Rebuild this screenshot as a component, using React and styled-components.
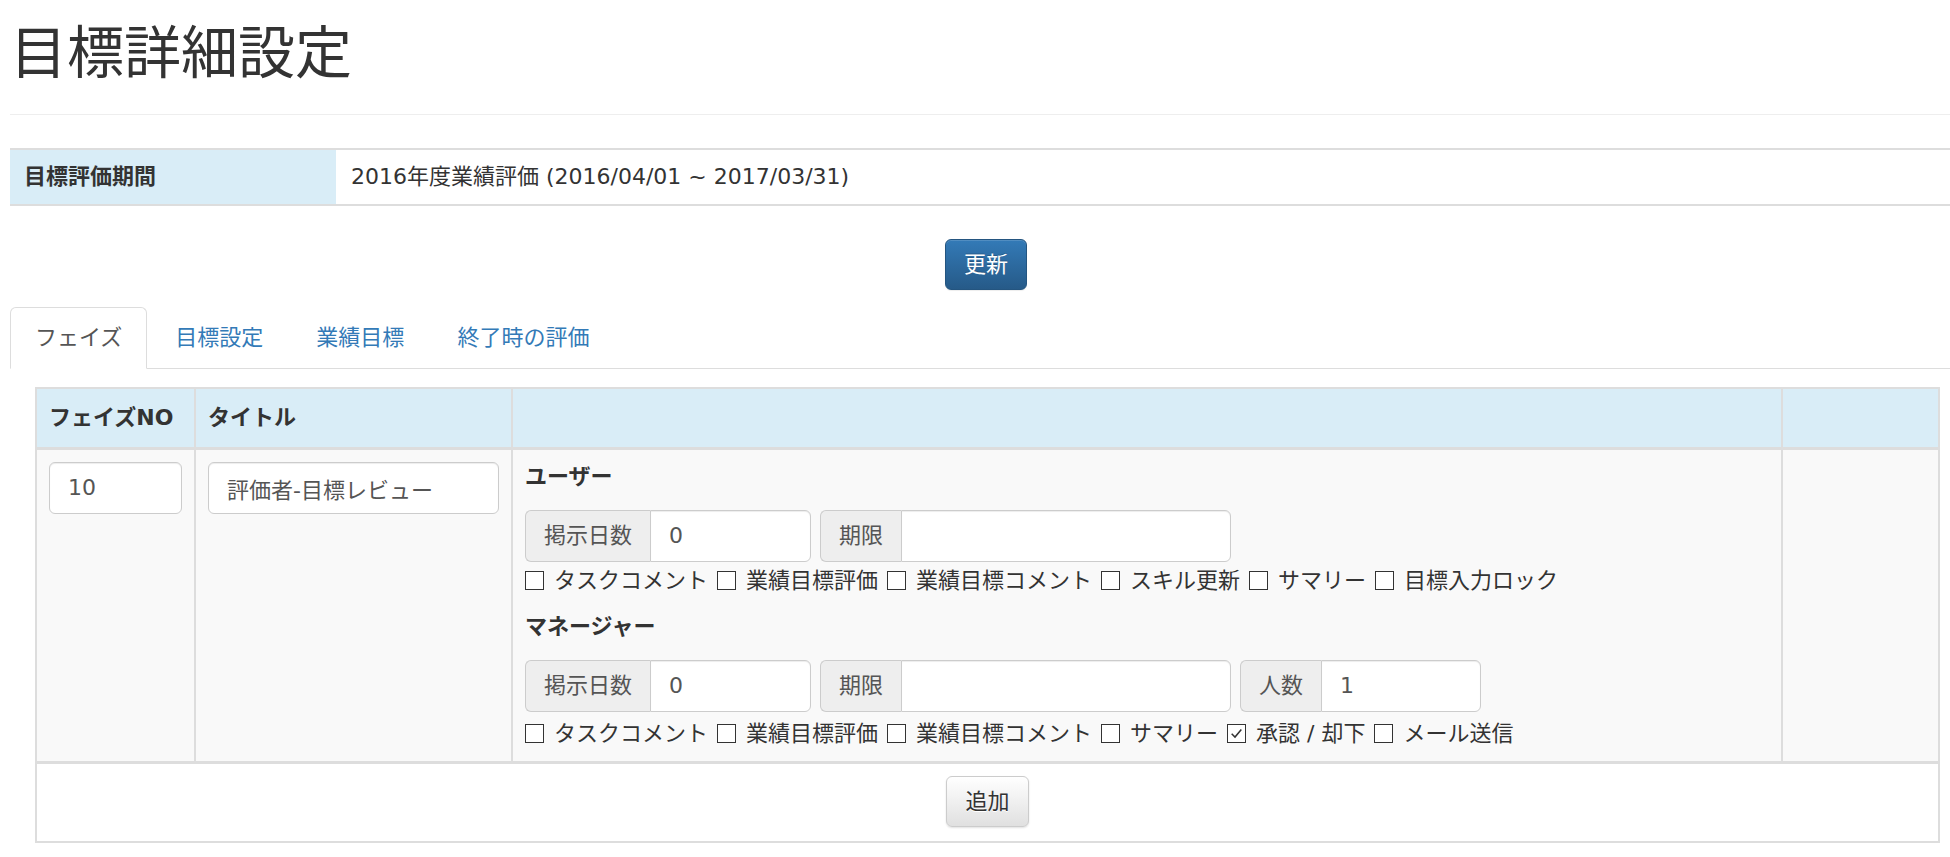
import React from "react"
import styled, { createGlobalStyle } from "styled-components"

const GlobalStyle = createGlobalStyle`
  html, body {
    margin: 0;
    padding: 0;
    background: #fff;
    overflow: hidden;
  }
  body {
    font-family: "DejaVu Sans", "Noto Sans CJK JP", sans-serif;
    font-size: 22px;
    line-height: 30px;
    color: #333;
  }
  * {
    box-sizing: border-box;
  }
`

const userChecks = [
  { label: "タスクコメント" },
  { label: "業績目標評価" },
  { label: "業績目標コメント" },
  { label: "スキル更新" },
  { label: "サマリー" },
  { label: "目標入力ロック" },
]

const managerChecks = [
  { label: "タスクコメント" },
  { label: "業績目標評価" },
  { label: "業績目標コメント" },
  { label: "サマリー" },
  { label: "承認 / 却下", checked: true },
  { label: "メール送信" },
]

const tabs = ["フェイズ", "目標設定", "業績目標", "終了時の評価"]

const CheckList = ({ items, gap }) => (
  <CheckRow $gap={gap}>
    {items.map((c) => (
      <CheckItem key={c.label}>
        <Box>
          {c.checked && (
            <svg width="15" height="15" viewBox="0 0 14 14">
              <path d="M2.5 7.2 L5.6 10.3 L11.5 3.2" fill="none" stroke="#333" strokeWidth="1.4" />
            </svg>
          )}
        </Box>
        <span>{c.label}</span>
      </CheckItem>
    ))}
  </CheckRow>
)

const App = () => {
  return (
    <Page>
      <GlobalStyle />
      <Title>目標詳細設定</Title>
      <Divider />
      <InfoTable>
        <tbody>
          <tr>
            <InfoLabel>目標評価期間</InfoLabel>
            <InfoValue>2016年度業績評価 (2016/04/01 ~ 2017/03/31)</InfoValue>
          </tr>
        </tbody>
      </InfoTable>
      <ButtonRow>
        <PrimaryButton>更新</PrimaryButton>
      </ButtonRow>
      <Tabs>
        {tabs.map((t, i) => (
          <Tab key={t} $active={i === 0}>
            {t}
          </Tab>
        ))}
      </Tabs>
      <PhaseTable>
        <colgroup>
          <col style={{ width: 159 }} />
          <col style={{ width: 317 }} />
          <col style={{ width: 1270 }} />
          <col />
        </colgroup>
        <thead>
          <tr>
            <HeadCell>フェイズNO</HeadCell>
            <HeadCell>タイトル</HeadCell>
            <HeadCell />
            <HeadCell />
          </tr>
        </thead>
        <tbody>
          <tr>
            <BodyCell>
              <TextInput value="10" readOnly />
            </BodyCell>
            <BodyCell>
              <TextInput value="評価者-目標レビュー" readOnly />
            </BodyCell>
            <BodyCell>
              <SectionTitle>ユーザー</SectionTitle>
              <GroupRow>
                <InputGroup $w={286}>
                  <Addon>掲示日数</Addon>
                  <GroupInput value="0" readOnly />
                </InputGroup>
                <InputGroup $w={411}>
                  <Addon>期限</Addon>
                  <GroupInput value="" readOnly />
                </InputGroup>
              </GroupRow>
              <CheckList items={userChecks} gap={4} />
              <SectionTitle $gap>マネージャー</SectionTitle>
              <GroupRow>
                <InputGroup $w={286}>
                  <Addon>掲示日数</Addon>
                  <GroupInput value="0" readOnly />
                </InputGroup>
                <InputGroup $w={411}>
                  <Addon>期限</Addon>
                  <GroupInput value="" readOnly />
                </InputGroup>
                <InputGroup $w={241}>
                  <Addon>人数</Addon>
                  <GroupInput value="1" readOnly />
                </InputGroup>
              </GroupRow>
              <CheckList items={managerChecks} gap={7} />
            </BodyCell>
            <BodyCell />
          </tr>
          <tr>
            <FootCell colSpan={4}>
              <DefaultButton>追加</DefaultButton>
            </FootCell>
          </tr>
        </tbody>
      </PhaseTable>
    </Page>
  )
}

export default App

const Page = styled.div`
  width: calc(100% + 12px);
  padding: 0 0 20px 10px;
`
const Title = styled.h1`
  margin: 22px 0 0;
  font-size: 57px;
  line-height: 63px;
  font-weight: 400;
  color: #333;
`
const Divider = styled.hr`
  margin: 29px 0 33px;
  border: 0;
  border-top: 1px solid #eee;
`
const InfoTable = styled.table`
  width: 100%;
  border-collapse: collapse;
  border-top: 2px solid #ddd;
  border-bottom: 2px solid #ddd;
`
const InfoLabel = styled.th`
  width: 326px;
  padding: 12px 14px;
  background: #d9edf7;
  text-align: left;
  font-weight: 700;
`
const InfoValue = styled.td`
  padding: 12px 15px;
`
const ButtonRow = styled.div`
  display: flex;
  justify-content: center;
  margin-top: 33px;
`
const PrimaryButton = styled.button`
  font: inherit;
  line-height: 29px;
  padding: 10px 18px;
  color: #fff;
  background: linear-gradient(to bottom, #337ab7 0%, #265a88 100%);
  border: 1px solid #245580;
  border-radius: 6px;
  box-shadow: inset 0 1px 0 rgba(255, 255, 255, 0.15), 0 1px 1px rgba(0, 0, 0, 0.075);
  text-shadow: 0 -1px 0 rgba(0, 0, 0, 0.2);
`
const DefaultButton = styled.button`
  font: inherit;
  line-height: 29px;
  padding: 10px 18px;
  color: #333;
  background: linear-gradient(to bottom, #fff 0%, #e0e0e0 100%);
  border: 1px solid #ccc;
  border-radius: 6px;
  box-shadow: inset 0 1px 0 rgba(255, 255, 255, 0.15), 0 1px 2px rgba(0, 0, 0, 0.12);
  text-shadow: 0 1px 0 #fff;
`
const Tabs = styled.ul`
  display: flex;
  margin: 17px 0 0;
  padding: 0;
  list-style: none;
  border-bottom: 1px solid #ddd;
`
const Tab = styled.li`
  margin-right: 3px;
  margin-bottom: -1px;
  padding: 15px 24px;
  line-height: 30px;
  border: 1px solid ${(p) => (p.$active ? "#ddd" : "transparent")};
  border-bottom-color: transparent;
  border-radius: 6px 6px 0 0;
  background: ${(p) => (p.$active ? "#fff" : "transparent")};
  color: ${(p) => (p.$active ? "#555" : "#337ab7")};
`
const PhaseTable = styled.table`
  margin: 18px 22px 0 25px;
  width: calc(100% - 47px);
  border-collapse: collapse;
  table-layout: fixed;
`
const HeadCell = styled.th`
  padding: 12px;
  background: #d9edf7;
  border: 2px solid #ddd;
  border-bottom-width: 3px;
  text-align: left;
  font-weight: 700;
  height: 60px;
`
const BodyCell = styled.td`
  padding: 12px;
  background: #f9f9f9;
  border: 2px solid #ddd;
  vertical-align: top;
`
const FootCell = styled.td`
  padding: 12px 12px 14px;
  background: #fff;
  border: 2px solid #ddd;
  border-top-width: 3px;
  text-align: center;
`
const TextInput = styled.input`
  display: block;
  width: 100%;
  height: 52px;
  padding: 0 18px;
  font: inherit;
  color: #555;
  background: #fff;
  border: 1px solid #ccc;
  border-radius: 6px;
  box-shadow: inset 0 1px 1px rgba(0, 0, 0, 0.075);
  outline: none;
`
const SectionTitle = styled.div`
  font-weight: 700;
  margin-top: ${(p) => (p.$gap ? "16px" : "0")};
`
const GroupRow = styled.div`
  display: flex;
  gap: 9px;
  margin-top: 18px;
`
const InputGroup = styled.div`
  display: flex;
  width: ${(p) => p.$w}px;
  height: 52px;
`
const Addon = styled.span`
  display: flex;
  align-items: center;
  padding: 0 18px;
  color: #555;
  background: #eee;
  border: 1px solid #ccc;
  border-right: 0;
  border-radius: 6px 0 0 6px;
  white-space: nowrap;
`
const GroupInput = styled.input`
  flex: 1;
  min-width: 0;
  padding: 0 18px;
  font: inherit;
  color: #555;
  background: #fff;
  border: 1px solid #ccc;
  border-radius: 0 6px 6px 0;
  box-shadow: inset 0 1px 1px rgba(0, 0, 0, 0.075);
  outline: none;
`
const CheckRow = styled.div`
  display: flex;
  flex-wrap: wrap;
  gap: 9px;
  margin-top: ${(p) => p.$gap}px;
`
const CheckItem = styled.label`
  display: inline-flex;
  align-items: center;
  gap: 10px;
`
const Box = styled.span`
  display: inline-flex;
  align-items: center;
  justify-content: center;
  width: 19px;
  height: 19px;
  background: #fff;
  border: 1px solid #333;
`
